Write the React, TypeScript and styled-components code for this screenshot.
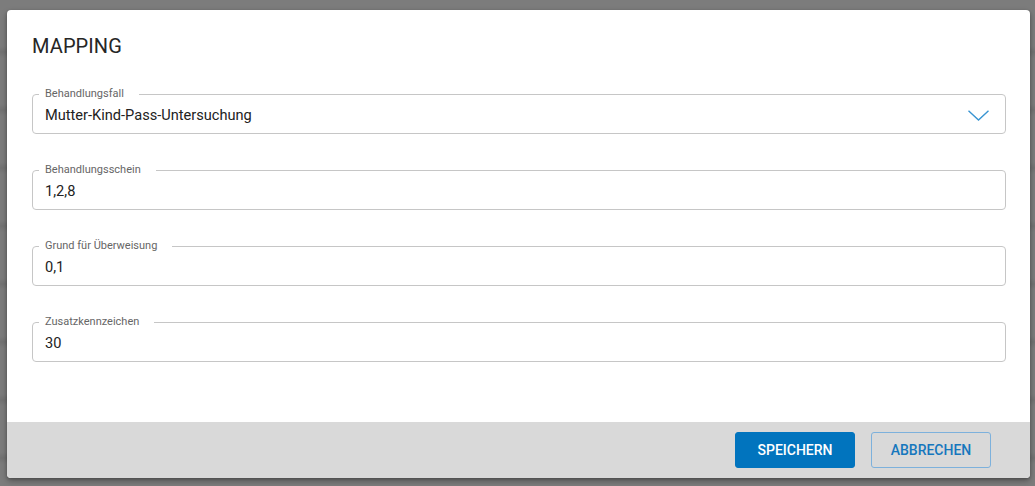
import styled, { createGlobalStyle } from 'styled-components'

const GlobalStyle = createGlobalStyle`
  html, body {
    margin: 0;
    padding: 0;
  }
  body {
    width: 1035px;
    height: 486px;
    overflow: hidden;
    font-family: Roboto, "Liberation Sans", Arial, sans-serif;
    background-color: #7c7c7c;
    background-image: repeating-linear-gradient(
      180deg,
      rgba(0, 0, 0, 0) 0px,
      rgba(0, 0, 0, 0) 46px,
      rgba(0, 0, 0, 0.08) 52px,
      rgba(0, 0, 0, 0) 58px
    );
  }
`

const Backdrop = styled.div`
  padding: 10px 5px 9px 7px;
`

const Dialog = styled.div`
  width: 1023px;
  background: #fff;
  border-radius: 4px;
  overflow: hidden;
  box-shadow: 0 3px 6px rgba(0, 0, 0, 0.3), 0 1px 3px rgba(0, 0, 0, 0.2);
  display: flex;
  flex-direction: column;
`

const Content = styled.div`
  padding: 24px 24px 60px 25px;
  display: flex;
  flex-direction: column;
  gap: 30px;
`

const Title = styled.h2`
  margin: 0;
  font-size: 20px;
  line-height: 24px;
  font-weight: 400;
  color: #262626;
  letter-spacing: 0.1px;
`

const Fields = styled.div`
  display: flex;
  flex-direction: column;
  gap: 30px;
`

const Field = styled.fieldset`
  margin: 0;
  padding: 0 12px 4px 6px;
  border: 1px solid #c6c6c6;
  border-radius: 4px;
  min-width: 0;
`

const Legend = styled.legend`
  padding: 0 15px 0 6px;
  font-size: 11px;
  line-height: 12px;
  color: #666;
`

const Row = styled.div`
  display: flex;
  align-items: center;
  height: 29px;
  padding-left: 6px;
`

const Value = styled.span`
  flex: 1;
  font-size: 14.6px;
  color: #222;
`

const Chevron = styled.svg`
  width: 21px;
  height: 11px;
  margin-right: 4px;
  margin-top: 1px;
`

const Footer = styled.div`
  background: #d9d9d9;
  height: 56px;
  padding: 0 39px 0 0;
  display: flex;
  align-items: center;
  justify-content: flex-end;
  gap: 16px;
`

const Button = styled.button<{ $primary?: boolean }>`
  height: 36px;
  width: 120px;
  border-radius: 3px;
  font-family: Roboto, "Liberation Sans", Arial, sans-serif;
  font-size: 14px;
  font-weight: 500;
  text-transform: uppercase;
  cursor: pointer;
  background: ${(p) => (p.$primary ? '#0174be' : 'transparent')};
  color: ${(p) => (p.$primary ? '#fff' : '#1677bd')};
  border: 1px solid ${(p) => (p.$primary ? '#0174be' : '#7db1dc')};
`

const fields = [
  { label: 'Behandlungsfall', value: 'Mutter-Kind-Pass-Untersuchung', select: true },
  { label: 'Behandlungsschein', value: '1,2,8' },
  { label: 'Grund für Überweisung', value: '0,1' },
  { label: 'Zusatzkennzeichen', value: '30' },
]

const App = () => (
  <>
    <GlobalStyle />
    <Backdrop>
      <Dialog>
        <Content>
          <Title>MAPPING</Title>
          <Fields>
            {fields.map((f) => (
              <Field key={f.label}>
                <Legend>{f.label}</Legend>
                <Row>
                  <Value>{f.value}</Value>
                  {f.select && (
                    <Chevron viewBox="0 0 21 11">
                      <polyline
                        points="0.5,0.7 10.5,10 20.5,0.7"
                        fill="none"
                        stroke="#3a95d2"
                        strokeWidth="1.4"
                      />
                    </Chevron>
                  )}
                </Row>
              </Field>
            ))}
          </Fields>
        </Content>
        <Footer>
          <Button $primary>Speichern</Button>
          <Button>Abbrechen</Button>
        </Footer>
      </Dialog>
    </Backdrop>
  </>
)

export default App
